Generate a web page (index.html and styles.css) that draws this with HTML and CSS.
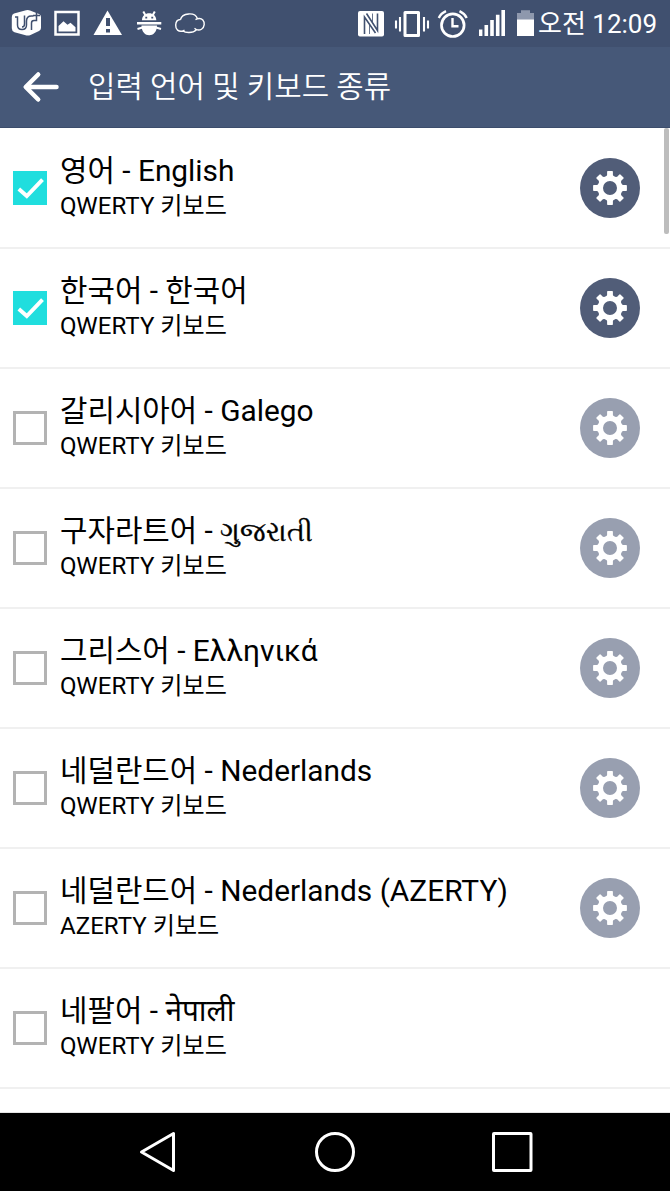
FILE: index.html
```html
<!DOCTYPE html>
<html lang="ko">
<head>
<meta charset="utf-8">
<title>입력 언어 및 키보드 종류</title>
<link rel="stylesheet" href="styles.css">
</head>
<body>
<svg class="sprite" aria-hidden="true">
  <symbol id="gear" viewBox="-30 -30 60 60">
    <circle r="9.700" fill="none" stroke="#fff" stroke-width="5.400"/>
    <g fill="#fff">
      <path id="tooth" d="M-4.200-11L-2.900-13V-16.200Q-2.900-16.900-2.200-16.900H2.200Q2.900-16.900 2.900-16.200V-13L4.200-11Z"/>
      <use href="#tooth" transform="rotate(45)"/>
      <use href="#tooth" transform="rotate(90)"/>
      <use href="#tooth" transform="rotate(135)"/>
      <use href="#tooth" transform="rotate(180)"/>
      <use href="#tooth" transform="rotate(225)"/>
      <use href="#tooth" transform="rotate(270)"/>
      <use href="#tooth" transform="rotate(315)"/>
    </g>
  </symbol>
  <symbol id="check" viewBox="0 0 34 34">
    <path d="M5.800 18l8 7L29.500 8.600" fill="none" stroke="#fff" stroke-width="3.900"/>
  </symbol>
</svg>

<div class="screen">
  <header class="status">
    <svg class="status-left" width="220" height="47" viewBox="0 0 220 47">
      <path d="M14 13.500l12-3.200q2-.6 4 .1l9 3.600q2 .8 2 3v11q0 2-2 3l-8.500 4q-2 .9-4 .4l-12-3.200q-2.700-1-2.700-4V17q0-2.600 2.200-3.500z" fill="#fff"/>
      <path d="M15 17h2.500v8q0 4.500 4.500 4.500t4.500-4.500v-4q0-5 5-5h2M24.500 15.500V24q0 3-2.500 3M31.500 30v-7q0-2.500 2.500-2.500h2.500v-6M33 15.500h7M36.500 11.500v5" fill="none" stroke="#40506f" stroke-width="1.500"/>
      <rect x="55.500" y="12" width="23" height="22.500" fill="none" stroke="#fff" stroke-width="2.500"/>
      <path d="M58.500 31.500V26l5-4.700 4 3.500 3-2 5 4.500v4.200z" fill="#fff"/>
      <path d="M107.500 10.500L122 35H93.500z" fill="#fff"/>
      <path d="M106 18h4v8h-4zM106 29h4v3.500h-4z" fill="#40506f"/>
      <path d="M142 20.300c0-9.500 14.300-9.500 14.300 0zM137 22h24.300v2.500H137zM141.500 25.500h15.500c0 13-15.500 13-15.500 0z" fill="#fff"/>
      <path d="M143.300 11.500l2 3.500m9.500-3.500l-2 3.500M137.500 29l5-1.500m13.500 0l5 1.500" stroke="#fff" stroke-width="2"/>
      <path d="M145.300 16.700h1.900v1.900h-1.900zM151.300 16.700h1.900v1.900h-1.900z" fill="#40506f"/>
      <path d="M180.500 19.500c1.500-6.500 14.500-8 17-.8 5-1.200 7 2.500 6.700 6-.5 4.500-4.200 6-7.700 5-4 4-11.500 3-13.500 1.300-4.500 1.300-7.500-1.700-7.300-6 .2-4 2.300-5.500 4.800-5.500m17-.8l-2 1m1 10l-2-1.500m-11.500 2.800l1.500-1" fill="none" stroke="#fff" stroke-width="1.400" stroke-linejoin="round"/>
    </svg>
    <svg class="status-right" width="180" height="47" viewBox="358 0 180 47">
      <rect x="358" y="11" width="26" height="25.500" rx="2" fill="#fff"/>
      <path d="M364.500 34V17L375.500 33M377.500 13.500V30.500L366.500 13.500" fill="none" stroke="#40506f" stroke-width="1.600"/>
      <path d="M369.500 24.500V34M372.500 13.500V22" fill="none" stroke="#40506f" stroke-width=".8"/>
      <path d="M405 12.400h13.500v23H405z" fill="none" stroke="#fff" stroke-width="3" stroke-linejoin="round"/>
      <path d="M396 20.500v8m4-11.500v14.500M424 17v14.500m4-11v8" stroke="#fff" stroke-width="2.100"/>
      <circle cx="452.800" cy="25.200" r="11.300" fill="none" stroke="#fff" stroke-width="2.700"/>
      <path d="M452.500 18v8.300h6M438.800 18q2-4.500 7.200-6.800m13.500 0q5 2.300 7.200 6.800" fill="none" stroke="#fff" stroke-width="2.400"/>
      <path d="M479 29.500h3.400v6.500H479zM484.500 25h3.600v11h-3.600zM490.200 20h3.600v16h-3.600zM495.900 14.800h3.600V36h-3.600zM501.400 10h3.600v26h-3.600z" fill="#fff"/>
      <path d="M517 13h4v-2.700h9V13h4v7h-17z" fill="#8e98ad"/>
      <path d="M517 19.500h17V36h-17z" fill="#fff"/>
    </svg>
    <span class="clock">오전 12:09</span>
  </header>

  <div class="appbar">
    <svg class="back" width="38" height="32" viewBox="0 0 38 32">
      <path d="M16.200 3.500L3.700 16l12.500 12.500M4.500 16H34.500" fill="none" stroke="#fff" stroke-width="4.500" stroke-linecap="round" stroke-linejoin="round"/>
    </svg>
    <h1 class="heading">입력 언어 및 키보드 종류</h1>
  </div>

  <main class="list">
    <div class="row">
      <span class="box on"><svg width="34" height="34"><use href="#check"/></svg></span>
      <div class="text"><div class="name">영어 - English</div><div class="kind">QWERTY 키보드</div></div>
      <span class="gear active"><svg width="60" height="60"><use href="#gear"/></svg></span>
    </div>
    <div class="row">
      <span class="box on"><svg width="34" height="34"><use href="#check"/></svg></span>
      <div class="text"><div class="name">한국어 - 한국어</div><div class="kind">QWERTY 키보드</div></div>
      <span class="gear active"><svg width="60" height="60"><use href="#gear"/></svg></span>
    </div>
    <div class="row">
      <span class="box"></span>
      <div class="text"><div class="name">갈리시아어 - Galego</div><div class="kind">QWERTY 키보드</div></div>
      <span class="gear"><svg width="60" height="60"><use href="#gear"/></svg></span>
    </div>
    <div class="row">
      <span class="box"></span>
      <div class="text"><div class="name">구자라트어 - <span class="gujarati" lang="gu">ગુજરાતી</span></div><div class="kind">QWERTY 키보드</div></div>
      <span class="gear"><svg width="60" height="60"><use href="#gear"/></svg></span>
    </div>
    <div class="row">
      <span class="box"></span>
      <div class="text"><div class="name">그리스어 - Ελληνικά</div><div class="kind">QWERTY 키보드</div></div>
      <span class="gear"><svg width="60" height="60"><use href="#gear"/></svg></span>
    </div>
    <div class="row">
      <span class="box"></span>
      <div class="text"><div class="name">네덜란드어 - Nederlands</div><div class="kind">QWERTY 키보드</div></div>
      <span class="gear"><svg width="60" height="60"><use href="#gear"/></svg></span>
    </div>
    <div class="row">
      <span class="box"></span>
      <div class="text"><div class="name">네덜란드어 - Nederlands (AZERTY)</div><div class="kind">AZERTY 키보드</div></div>
      <span class="gear"><svg width="60" height="60"><use href="#gear"/></svg></span>
    </div>
    <div class="row">
      <span class="box"></span>
      <div class="text"><div class="name">네팔어 - <span class="nepali" lang="ne">नेपाली</span></div><div class="kind">QWERTY 키보드</div></div>
    </div>
    <span class="scrollbar"></span>
  </main>

  <nav class="navbar">
    <svg width="40" height="44" viewBox="0 0 40 44"><path d="M35.500 3.500v37L3.500 22z" fill="none" stroke="#fff" stroke-width="3" stroke-linejoin="round"/></svg>
    <svg width="44" height="44" viewBox="0 0 44 44"><circle cx="22" cy="22" r="18.500" fill="none" stroke="#fff" stroke-width="3"/></svg>
    <svg width="44" height="44" viewBox="2 0 44 44"><rect x="3.500" y="3.500" width="37.500" height="37" rx=".5" fill="none" stroke="#fff" stroke-width="3"/></svg>
  </nav>
</div>
</body>
</html>
```
FILE: styles.css
```css
* { box-sizing: border-box; }

body {
  margin: 0;
  font-family: Roboto, "Noto Sans CJK KR", "Noto Sans", sans-serif;
  color: #000;
  background: #fff;
}

svg { display: block; overflow: visible; }

.sprite { position: absolute; width: 0; height: 0; }

.screen {
  display: flex;
  flex-direction: column;
  width: 670px;
  height: 1191px;
  overflow: hidden;
}

.status {
  display: flex;
  flex: none;
  height: 47px;
  color: #fff;
  background: #40506f;
}

.status-right { margin-left: 138px; }

.clock {
  padding-top: 1px;
  font-size: 26px;
  line-height: 46px;
  white-space: nowrap;
}

.appbar {
  display: flex;
  flex: none;
  align-items: center;
  height: 81px;
  padding: 0 0 0 22px;
  color: #fff;
  background: #465878;
  border-bottom: 1px solid #3c4d6c;
}

.heading {
  margin: 0 0 0 28px;
  font-size: 29.8px;
  font-weight: 350;
  line-height: 40px;
}

.list {
  position: relative;
  flex: 1;
  min-height: 0;
  border-bottom: 1px solid #e4e4e4;
}

.row {
  display: flex;
  height: 120px;
  padding: 0 30px 0 13px;
  box-shadow: 0 1px 0 #f0f0f0, inset 0 -1px 0 #f0f0f0;
}

.box {
  flex: none;
  width: 34px;
  height: 34px;
  margin-top: 43px;
  border: 3px solid #b3b3b3;
}

.box.on {
  border: 0;
  background: #20dede;
}

.text {
  flex: 1;
  padding: 23px 0 0 13px;
  white-space: nowrap;
}

.name { font-size: 29.83px; line-height: 39px; height: 39px; }

.gujarati { font-size: 27.2px; -webkit-text-stroke: .4px #000; }

.kind { font-size: 24.1px; line-height: 32px; height: 32px; }

.gear {
  width: 60px;
  height: 60px;
  margin-top: 30px;
  border-radius: 50%;
  background: #989fb0;
}

.gear.active { background: #515d78; }

.scrollbar {
  position: absolute;
  top: 0;
  right: 1px;
  width: 5px;
  height: 106px;
  border-radius: 2px;
  background: #bdbdbd;
}

.navbar {
  display: flex;
  flex: none;
  align-items: center;
  height: 78px;
  padding-left: 138px;
  background: #000;
}

.navbar svg + svg { margin-left: 135px; }
```
